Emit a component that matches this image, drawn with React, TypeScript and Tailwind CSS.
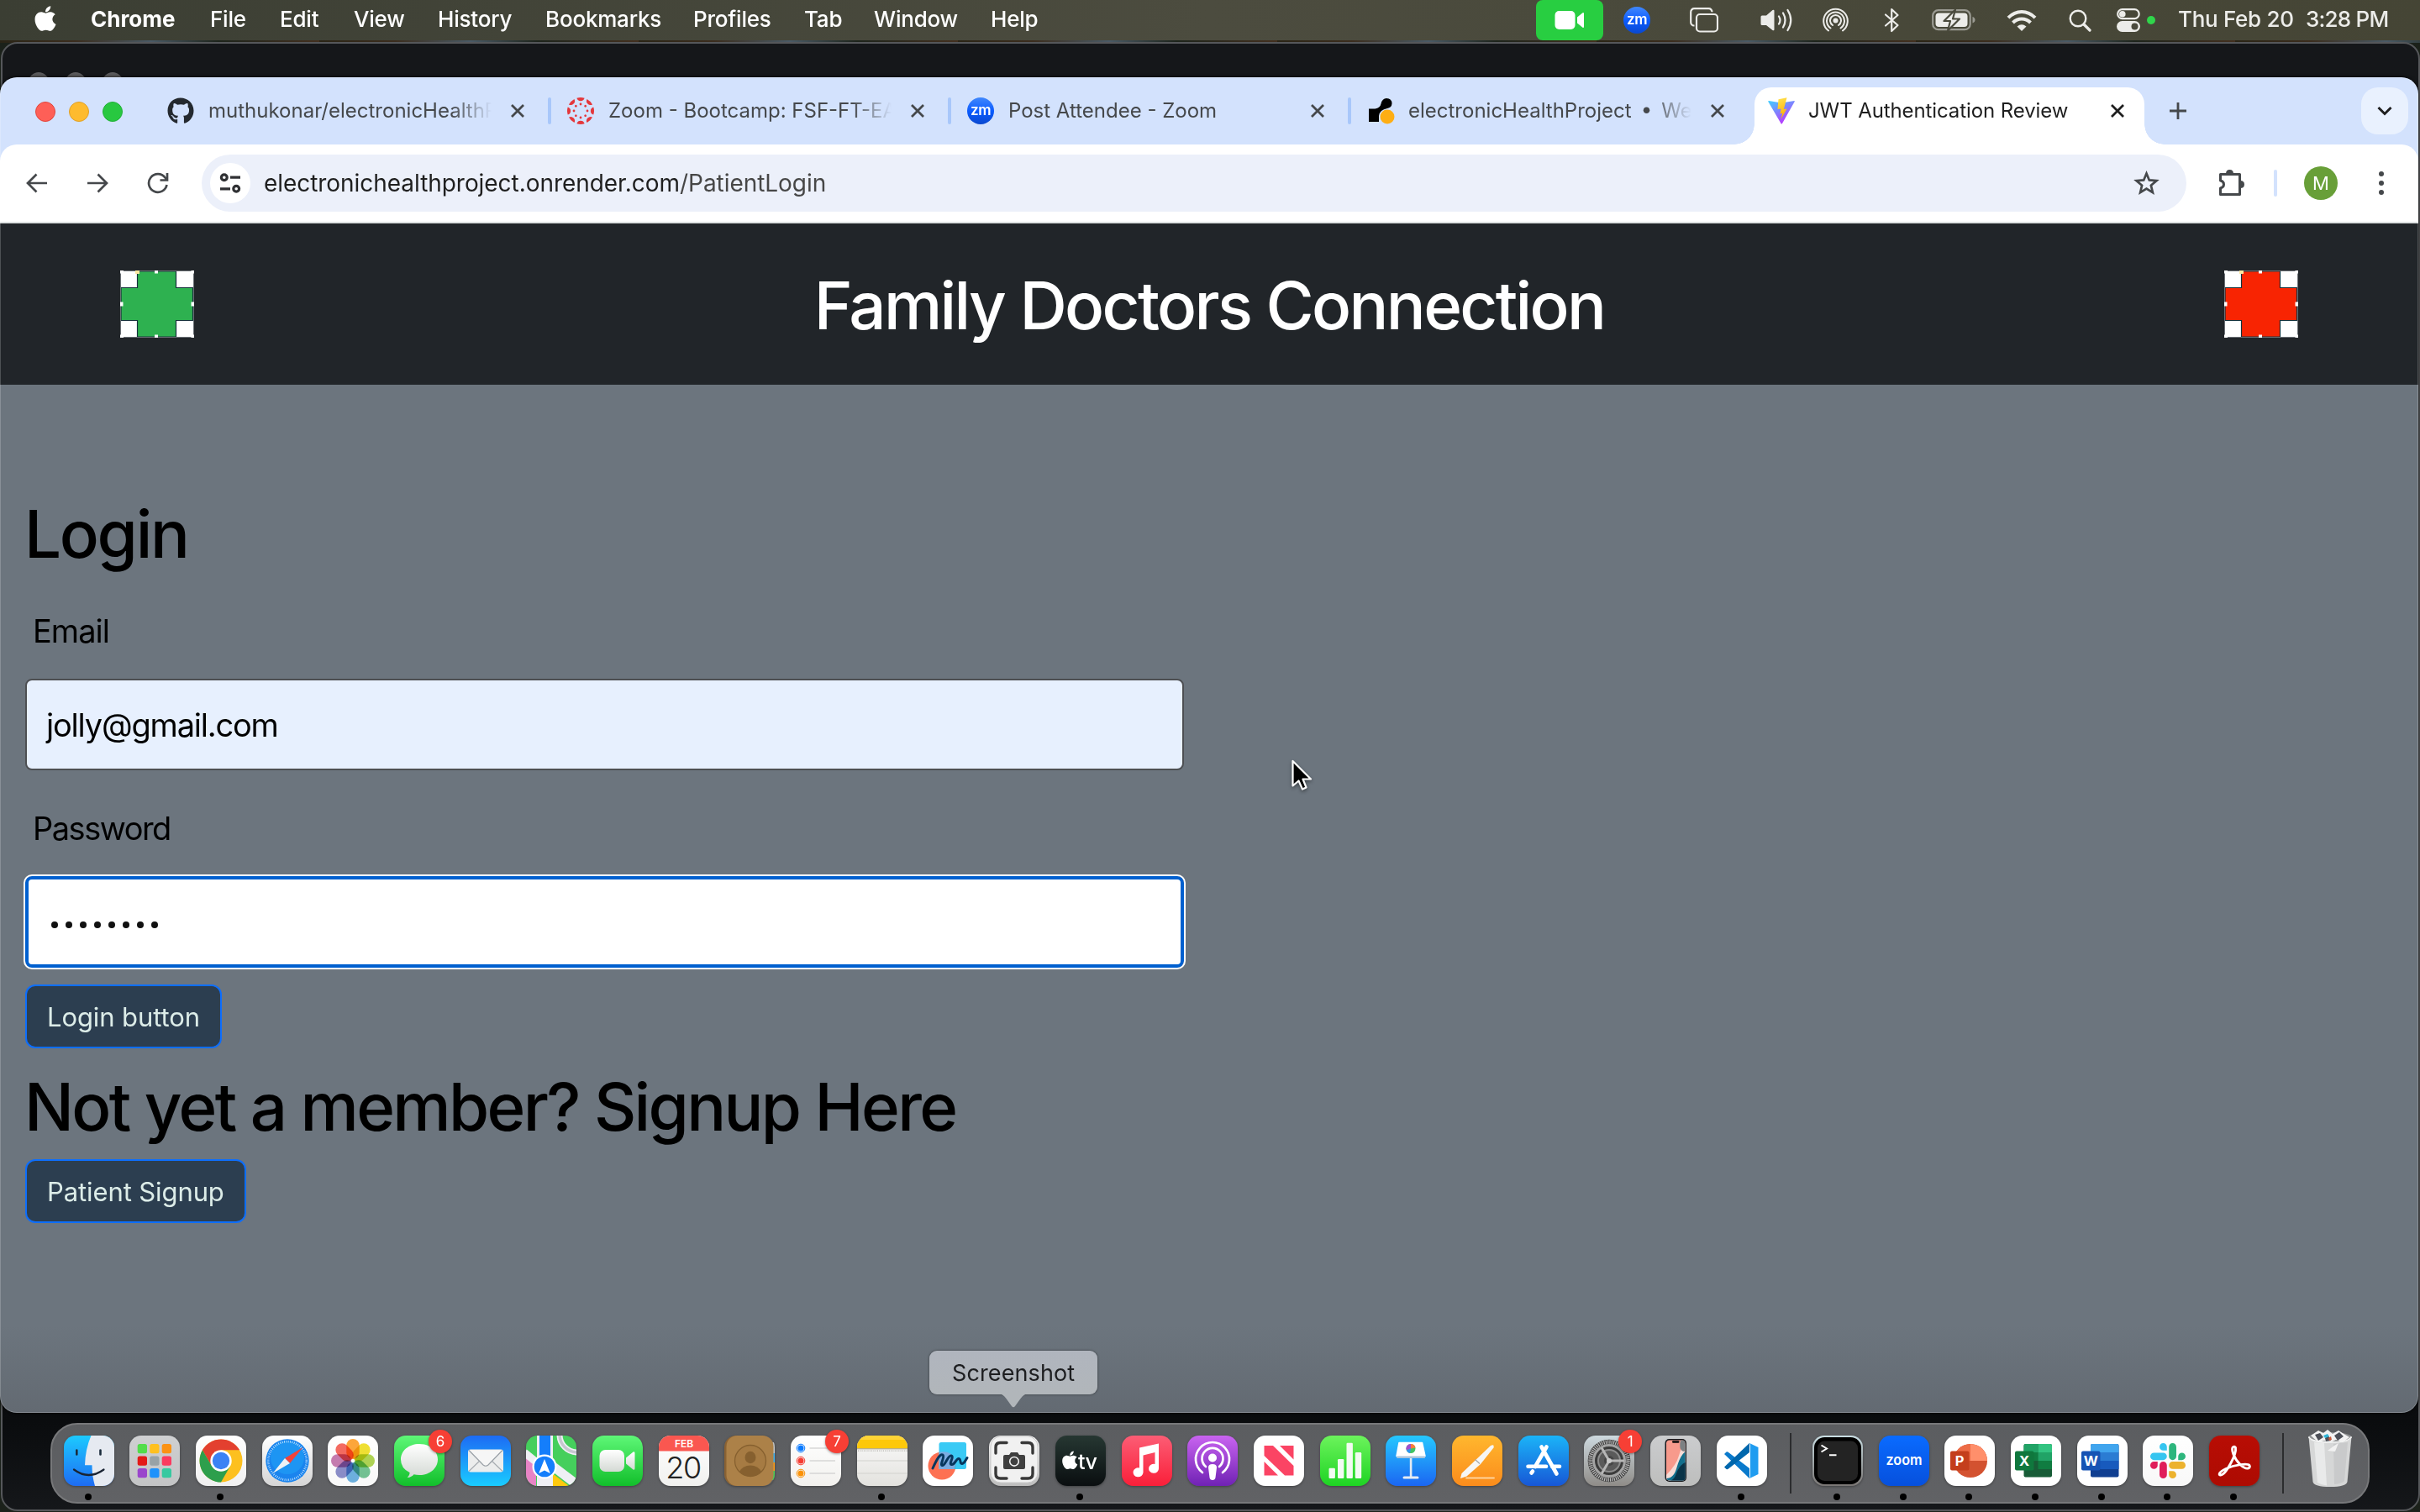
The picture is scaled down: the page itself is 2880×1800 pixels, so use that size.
import React from 'react';
import { FaApple, FaGithub } from 'react-icons/fa';

/* ---------- macOS menu bar ---------- */

const menus = [
  { label: 'File', x: 'w-[83px]' },
  { label: 'Edit', x: 'w-[88px]' },
  { label: 'View', x: 'w-[100px]' },
  { label: 'History', x: 'w-[128px]' },
  { label: 'Bookmarks', x: 'w-[176px]' },
  { label: 'Profiles', x: 'w-[132px]' },
  { label: 'Tab', x: 'w-[83px]' },
  { label: 'Window', x: 'w-[139px]' },
  { label: 'Help', x: 'w-[80px]' },
];

function ZmBadge() {
  return (
    <span className="flex h-8 w-8 shrink-0 items-center justify-center rounded-full bg-gradient-to-b from-[#4087fc] via-[#0b5cff] to-[#0a48cf] pb-[2px] text-[17px] font-semibold leading-none tracking-[-0.5px] text-white">
      zm
    </span>
  );
}

function MenuBar() {
  return (
    <header className="flex h-12 items-center bg-gradient-to-r from-[#3b3e33] via-[#4c4c3f] to-[#454535] text-[26px] font-medium leading-none text-white">
      <FaApple className="-mt-1 ml-[40px] h-[34px] w-[28px] shrink-0" />
      <span className="ml-[40px] w-[142px] pb-[3px] font-bold">Chrome</span>
      <nav className="flex pb-[3px] tracking-[-0.2px]">
        {menus.map((m) => (
          <span key={m.label} className={m.x + ' shrink-0 whitespace-nowrap'}>{m.label}</span>
        ))}
      </nav>
      <div className="ml-auto flex w-[1052px] shrink-0 items-center text-[#ecece9]">
        <span className="flex h-12 w-20 items-center justify-center rounded-lg bg-[#28ce41]">
          <svg width="36" height="24" viewBox="0 0 36 24" fill="#fff">
            <rect x="0.500" y="1" width="24" height="22" rx="5" />
            <path d="M27 8.500 33.500 3.200Q35 2.500 35 4.200V19.800Q35 21.500 33.500 20.800L27 15.500Z" />
          </svg>
        </span>
        <span className="ml-6"><ZmBadge /></span>
        <svg className="ml-[47px]" width="34" height="30" viewBox="0 0 34 30" fill="none" stroke="currentColor" strokeWidth="2.200">
          <path d="M5.500 21.500H5A4 4 0 0 1 1.200 17.500V5.200A4 4 0 0 1 5.200 1.200H22.500A4 4 0 0 1 26.500 5.200" />
          <rect x="8" y="8" width="25" height="20.500" rx="4" />
        </svg>
        <svg className="ml-[50px]" width="39" height="30" viewBox="0 0 39 30" fill="none" stroke="currentColor" strokeWidth="2.200" strokeLinecap="round">
          <path d="M2 9.500H7L14.500 3Q16.500 2 16.500 4V26Q16.500 28 14.500 27L7 21H2Q.5 21 .5 19.500V11Q.5 9.500 2 9.500Z" fill="currentColor" stroke="none" />
          <path d="M22 10.500Q25 15 22 19.500M27 6.500Q32 15 27 23.500M32.500 3Q40 15 32.500 27" />
        </svg>
        <svg className="ml-[35px]" width="31" height="30" viewBox="0 0 31 30" fill="none" stroke="currentColor" strokeWidth="2" strokeLinecap="round">
          <circle cx="15.500" cy="15.500" r="3" fill="currentColor" stroke="none" />
          <path d="M12 21A6.500 6.500 0 1 1 19 21M9.500 24.500A10.500 10.500 0 1 1 21.500 24.500M7 27.500A14.300 14.300 0 1 1 24 27.500" />
        </svg>
        <svg className="ml-[42px]" width="19" height="30" viewBox="0 0 19 30" fill="none" stroke="currentColor" strokeWidth="2.200" strokeLinejoin="round" strokeLinecap="round">
          <path d="M2 8.500 16.500 21 9.200 28V2L16.500 9 2 21.500" />
        </svg>
        <svg className="ml-[38px]" width="52" height="26" viewBox="0 0 52 26">
          <rect x="1.200" y="1.200" width="44.500" height="23" rx="6.500" fill="none" stroke="#9a9a92" strokeWidth="2.200" />
          <rect x="4.500" y="4.500" width="38" height="16.500" rx="4" fill="currentColor" />
          <path d="M48.500 9Q51.500 10 51.500 12.800 51.500 15.500 48.500 16.500Z" fill="#9a9a92" />
          <path d="M28 .5 14.500 14H22L19 25.500 33 11.500H25Z" fill="currentColor" stroke="#4a4a3d" strokeWidth="2.200" strokeLinejoin="round" />
        </svg>
        <svg className="ml-[37px]" width="36" height="27" viewBox="0 0 36 27" fill="none" stroke="currentColor" strokeWidth="4">
          <path d="M2 10.200Q9 3 18 3T34 10.200M7.500 16Q12 11.500 18 11.500T28.500 16" />
          <path d="M12.500 20.500Q18 16 23.500 20.500L18 26Z" fill="currentColor" stroke="none" />
        </svg>
        <svg className="ml-[38px]" width="27" height="27" viewBox="0 0 27 27" fill="none" stroke="currentColor" strokeWidth="2.400" strokeLinecap="round">
          <circle cx="11" cy="11" r="9.300" />
          <path d="m18 18 7 7" strokeWidth="3.200" />
        </svg>
        <svg className="ml-[30px]" width="28" height="28" viewBox="0 0 28 28">
          <rect x="1.200" y="1.200" width="25.500" height="11" rx="5.500" fill="none" stroke="currentColor" strokeWidth="2.200" />
          <circle cx="6.800" cy="6.700" r="3.800" fill="currentColor" />
          <rect x="0" y="15" width="28" height="13" rx="6.500" fill="currentColor" />
          <circle cx="21.500" cy="21.500" r="4" fill="#4a4a3d" />
        </svg>
        <span className="ml-[8px] h-[10px] w-[10px] rounded-full bg-[#30d54b]" />
        <span className="ml-[27px] w-[152px] whitespace-nowrap pb-[3px] tracking-[-0.3px]">Thu Feb 20</span>
        <span className="whitespace-nowrap pb-[3px] tracking-[-0.8px]">3:28 PM</span>
      </div>
    </header>
  );
}

/* ---------- Chrome window ---------- */

function CloseX() {
  return (
    <svg width="18" height="18" viewBox="0 0 18 18" stroke="currentColor" strokeWidth="2.800" className="shrink-0">
      <path d="m2 2 14 14M16 2 2 16" />
    </svg>
  );
}

function CanvasLogo() {
  const spokes = [0, 45, 90, 135, 180, 225, 270, 315];
  return (
    <svg width="32" height="32" viewBox="0 0 32 32" fill="#e4373c" className="shrink-0">
      {spokes.map((a) => (
        <g key={a} transform={`rotate(${a} 16 16)`}>
          <path d="M11.400 .7A16 16 0 0 1 20.600 .7A4.800 4.800 0 0 1 11.400 .7Z" />
          <circle cx="16" cy="8" r="1.400" />
        </g>
      ))}
    </svg>
  );
}

function RenderLogo() {
  return (
    <svg width="32" height="32" viewBox="0 0 32 32" className="shrink-0">
      <path d="M0 13.500H7.500Q13.500 12.500 14.500 7.500 16 1 21 1 27.500 1 27.500 7.500 27 12 22 13 13 14.500 12 22V29H0Z" fill="#000" />
      <circle cx="22" cy="23" r="8.500" fill="#feae14" />
    </svg>
  );
}

function ViteLogo() {
  return (
    <svg width="32" height="32" viewBox="0 0 32 32" className="shrink-0">
      <defs>
        <linearGradient id="vt" x1="0" y1="0" x2=".6" y2="1">
          <stop stopColor="#41d1ff" /><stop offset="1" stopColor="#bd34fe" />
        </linearGradient>
        <linearGradient id="vb" x1=".4" y1="0" x2=".6" y2="1">
          <stop stopColor="#ffe04a" /><stop offset="1" stopColor="#ffa800" />
        </linearGradient>
      </defs>
      <path d="M1 4 16 6.500 31.500 4Q32 4.300 31.700 5L17 31Q16.200 32 15.500 31L.3 5Q0 4.200 1 4Z" fill="url(#vt)" />
      <path d="M22.500 .2 12.500 2.200 11.500 14 15.500 13.400 14.500 19.500 17.200 18.800 15.500 26 22.500 13.500 18.800 14Z" fill="url(#vb)" />
    </svg>
  );
}

function Tab({ icon, title, fade, sep }: { icon: React.ReactNode; title: string; fade?: boolean; sep?: boolean }) {
  return (
    <div className="relative flex w-[476px] shrink-0 items-center pl-[22px] text-[24px] text-[#45484b]">
      {sep && <span className="absolute left-[-1px] top-1/2 h-8 w-[4px] -translate-y-1/2 rounded-full bg-[#a8c7fa]" />}
      {icon}
      <span
        className={
          'ml-[17px] w-[337px] overflow-hidden whitespace-pre leading-[32px] ' +
          (fade ? '[mask-image:linear-gradient(to_right,#000_86%,transparent_100%)]' : '')
        }
      >
        {title}
      </span>
      <span className="ml-[22px] flex"><CloseX /></span>
    </div>
  );
}

function TabStrip() {
  return (
    <div className="flex h-20 items-stretch bg-[#d3e2fd]">
      <div className="flex w-[177px] shrink-0 items-center gap-4 pl-[42px] pt-[2px]">
        <span className="h-6 w-6 rounded-full border border-[#e2453b] bg-[#fe5f57]" />
        <span className="h-6 w-6 rounded-full border border-[#e0a028] bg-[#febb2e]" />
        <span className="h-6 w-6 rounded-full border border-[#22b038] bg-[#28c840]" />
      </div>
      <Tab icon={<FaGithub className="h-8 w-8 shrink-0 text-[#24292f]" />} title="muthukonar/electronicHealthP" fade />
      <Tab icon={<CanvasLogo />} title="Zoom - Bootcamp: FSF-FT-EA" fade sep />
      <Tab icon={<ZmBadge />} title="Post Attendee - Zoom" sep />
      <Tab icon={<span className="ml-[2px] mr-[-2px]"><RenderLogo /></span>} title={'electronicHealthProject \u2009•\u2009 We'} fade sep />
      <div className="relative ml-[7px] mt-3 flex w-[464px] shrink-0 items-center rounded-t-[20px] bg-white pb-3 pl-[16px] text-[24px] text-[#1f1f1f]">
        <span className="absolute -left-6 bottom-0 h-6 w-6 bg-[radial-gradient(circle_at_0_0,transparent_23.5px,white_24px)]" />
        <span className="absolute -right-6 bottom-0 h-6 w-6 bg-[radial-gradient(circle_at_100%_0,transparent_23.5px,white_24px)]" />
        <ViteLogo />
        <span className="ml-[16px] w-[359px] whitespace-nowrap leading-[32px] tracking-[-0.100px]">JWT Authentication Review</span>
        <CloseX />
      </div>
      <div className="flex flex-1 items-center pl-[29px] text-[#45484b]">
        <svg width="22" height="22" viewBox="0 0 22 22" stroke="currentColor" strokeWidth="2.800"><path d="M11 1V21M1 11H21" /></svg>
        <span className="ml-auto mr-[12px] flex h-14 w-14 items-center justify-center rounded-[20px] bg-[#e9f1fe] text-[#1f1f1f]">
          <svg width="18" height="12" viewBox="0 0 18 12" fill="none" stroke="currentColor" strokeWidth="3"><path d="m1.500 2 7.500 7.500L16.500 2" /></svg>
        </span>
      </div>
    </div>
  );
}

function Toolbar() {
  return (
    <div className="bg-[#d3e2fd]">
      <div className="flex h-[92px] items-center rounded-t-[20px] bg-white text-[#45484b]">
        <svg className="ml-[31px]" width="26" height="24" viewBox="0 0 26 24" fill="none" stroke="currentColor" strokeWidth="2.700"><path d="M25 12H2.500M12.500 1.500 2 12l10.500 10.500" /></svg>
        <svg className="ml-[46px]" width="26" height="24" viewBox="0 0 26 24" fill="none" stroke="currentColor" strokeWidth="2.700"><path d="M1 12H23.500M13.500 1.500 24 12 13.500 22.500" /></svg>
        <svg className="ml-[46px]" width="26" height="26" viewBox="0 0 26 26" fill="none" stroke="currentColor" strokeWidth="2.700"><path d="M23.500 15A10.800 10.800 0 1 1 21.500 6.500L23.500 9M24 1V9.500H15.500" /></svg>
        <div className="ml-[39px] flex h-[68px] w-[2362px] items-center rounded-full bg-[#ecf0fa]">
          <span className="ml-[10px] flex h-12 w-12 items-center justify-center rounded-full bg-white text-[#303134]">
            <svg width="26" height="24" viewBox="0 0 26 24" fill="none" stroke="currentColor" strokeWidth="3.200">
              <circle cx="5.800" cy="5.200" r="3.400" /><path d="M13 5.200H25M1 18.800H13" /><circle cx="20.200" cy="18.800" r="3.400" />
            </svg>
          </span>
          <span className="ml-[16px] text-[28px] leading-none tracking-[-0.05px] text-[#1f1f1f]">
            electronichealthproject.onrender.com<span className="text-[#474747]">/PatientLogin</span>
          </span>
          <svg className="ml-auto mr-[32px]" width="31" height="30" viewBox="0 0 31 30" fill="none" stroke="currentColor" strokeWidth="2.700" strokeLinejoin="miter">
            <path d="m15.500 3.500 3.300 7.900 8.700.7-6.600 5.600 2 8.400-7.400-4.500-7.400 4.500 2-8.400-6.600-5.600 8.700-.7Z" />
          </svg>
        </div>
        <svg className="ml-[37px]" width="33" height="34" viewBox="0 0 33 34" fill="none" stroke="currentColor" strokeWidth="3" strokeLinejoin="round">
          <path d="M3.500 6.500H26.500V30.500H3.500V23Q7.500 22 7.500 18.500T3.500 14Z" />
          <path d="M10 6Q10 1 14.500 1T19 6ZM27 14Q32 14 32 18.500T27 23Z" fill="currentColor" stroke="none" />
        </svg>
        <span className="ml-[34px] h-8 w-[4px] rounded-full bg-[#d3e2fd]" />
        <span className="ml-[32px] flex h-10 w-10 items-center justify-center rounded-full bg-[#689f38] text-[22px] leading-none text-white">M</span>
        <span className="ml-[49px] flex flex-col gap-[5px]">
          <i className="h-[6px] w-[6px] rounded-full bg-current" />
          <i className="h-[6px] w-[6px] rounded-full bg-current" />
          <i className="h-[6px] w-[6px] rounded-full bg-current" />
        </span>
      </div>
      <div className="h-[2px] bg-[#dfe3e3]" />
    </div>
  );
}

function Cross({ color, id }: { color: string; id: string }) {
  const hx = [0, 41, 82];
  return (
    <svg width="88" height="80" viewBox="0 0 88 80" aria-label={id}>
      <rect width="88" height="80" fill="#fff" />
      <path d="M20.500 1H66.500V20.500H86.500V59.500H66.500V79H20.500V59.500H1V20.500H20.500Z" fill={color} stroke="#14303a" strokeWidth="1.200" />
      <rect x=".5" y=".5" width="87" height="79" fill="none" stroke="#6b7075" />
      {hx.map((x) => (
        <g key={x} fill="#fff">
          <rect x={x === 82 ? 84.500 : x} width="4" height="3.500" />
          {x !== 41 && <rect x={x === 82 ? 84.500 : x} y="37.500" width="3.500" height="5" />}
          <rect x={x === 82 ? 84.500 : x} y="76.500" width="4" height="3.500" />
        </g>
      ))}
      <rect x="18" y="0" width="5" height="4" fill="#fbe6a0" />
    </svg>
  );
}

function LoginPage() {
  const button =
    'flex h-[76px] w-fit items-center rounded-[12px] border-2 border-[#0d6efd] bg-[#2c3e50] px-[24px] text-[31px] leading-none tracking-[-0.100px] text-[#dcece8]';
  return (
    <div className="flex flex-1 flex-col text-black">
      <div className="flex h-[192px] items-center justify-between bg-[#212529] pl-[143px] pr-[143px]">
        <Cross color="#2eb150" id="green cross" />
        <h1 className="pt-[3px] text-[78px] font-[520] leading-none tracking-[-2.650px] text-white">Family Doctors Connection</h1>
        <Cross color="#f82402" id="red cross" />
      </div>
      <main className="flex-1 bg-[linear-gradient(to_bottom,#6c757e_0px,#6c757e_1120px,#636a72_1224px)] pl-[30px] pt-[130px]">
        <h2 className="-ml-px text-[78px] font-[520] leading-[96px] tracking-[-2.300px]">Login</h2>
        <form>
          <label className="mt-[37px] block pl-[9px] text-[38px] leading-[60px] tracking-[-1px]">Email</label>
          <div className="mt-[27px] flex h-[109px] w-[1379px] items-center rounded-[8px] border-2 border-[#4d4f52] bg-[#e7f0fe] pl-[23px] text-[38px] leading-none tracking-[-1.200px]">
            jolly@gmail.com
          </div>
          <label className="mt-[39px] block pl-[9px] text-[38px] leading-[60px] tracking-[-1.500px]">Password</label>
          <div className="mt-[27px] flex h-[109px] w-[1379px] items-center gap-[9px] rounded-[8px] border-4 border-[#0060cf] bg-white pl-[27px] pt-[7px] outline-2 outline-white">
            {Array.from({ length: 8 }, (_, i) => (
              <i key={i} className="h-[8px] w-[8px] rounded-full bg-[#111]" />
            ))}
          </div>
          <div className={'mt-[20px] ' + button}>Login button</div>
        </form>
        <h2 className="-ml-px mt-[22px] text-[78px] font-[520] leading-[96px] tracking-[-2.650px]">Not yet a member? Signup Here</h2>
        <div className={'mt-[14px] ' + button}>Patient Signup</div>
      </main>
    </div>
  );
}

/* ---------- Dock icons (60 × 60) ---------- */

function Tile({ id, from, to, children }: { id: string; from: string; to: string; children?: React.ReactNode }) {
  return (
    <svg width="60" height="60" viewBox="0 0 60 60" className="rounded-[14px] shadow-[0_1px_3px_rgba(0,0,0,0.35)]">
      <defs>
        <linearGradient id={'bg' + id} x1="0" y1="0" x2="0" y2="1">
          <stop stopColor={from} /><stop offset="1" stopColor={to} />
        </linearGradient>
        <linearGradient id={'wh' + id} x1="0" y1="0" x2="0" y2="1">
          <stop stopColor="#fff" /><stop offset="1" stopColor="#d4d9d4" />
        </linearGradient>
      </defs>
      <rect width="60" height="60" fill={`url(#bg${id})`} />
      {children}
    </svg>
  );
}

const Finder = () => (
  <Tile id="fi" from="#1ccaff" to="#1e6cf2">
    <path d="M32.500 0Q25.500 16 25 35.300H33.500Q33.500 48 37 60H60V0Z" fill="#e6eaf1" />
    <path d="M15.300 17.500V22.500M43.500 17.500V22.500" stroke="#1a2b3c" strokeWidth="2.600" strokeLinecap="round" />
    <path d="M12 40.500Q29.500 53.500 47.500 40.500" fill="none" stroke="#1a2433" strokeWidth="2.200" strokeLinecap="round" />
  </Tile>
);

const Launchpad = () => {
  const c = ['#52dd4b', '#ffc01f', '#fb9214', '#e41a17', '#98a2a6', '#fb3a5f', '#9a45cc', '#1f92fb', '#36c9a0'];
  return (
    <Tile id="lp" from="#cfd0d2" to="#c3c4c5">
      {c.map((f, i) => (
        <rect key={i} x={9.700 + (i % 3) * 14.500} y={10 + Math.floor(i / 3) * 14.500} width="11.300" height="11.300" rx="2.500" fill={f} />
      ))}
    </Tile>
  );
};

const ChromeIcon = () => (
  <Tile id="ch" from="#ffffff" to="#f0f0f0">
    <circle cx="30" cy="30" r="25.500" fill="#fdc01f" />
    <path d="M7.920 17.250A25.500 25.500 0 0 1 52.080 17.250H30L18.960 36.370Z" fill="#e3402f" />
    <path d="M7.920 17.250A25.500 25.500 0 0 0 30 55.500L41.040 36.370 30 30 18.960 36.370Z" fill="#2d9f4c" />
    <circle cx="30" cy="30" r="12.700" fill="#fff" />
    <circle cx="30" cy="30" r="10.200" fill="#3b82f4" />
  </Tile>
);

const Safari = () => (
  <Tile id="sa" from="#ffffff" to="#d5d5d5">
    <circle cx="30" cy="30" r="25.700" fill="#1a84ee" />
    <circle cx="30" cy="26" r="20" fill="#1fa0f6" opacity=".6" />
    <circle cx="30" cy="30" r="22.800" fill="none" stroke="#cfe8ff" strokeWidth="2.600" strokeDasharray=".8 1.590" />
    <path d="M48.500 14 27 27 33 33Z" fill="#f2423a" />
    <path d="M12.500 45 27 27 33 33Z" fill="#eef2f5" />
  </Tile>
);

const Photos = () => {
  const petals = ['#fd9b1e', '#efdd16', '#a5cf3c', '#62bd86', '#5ba9e0', '#7c7fc4', '#c06ba6', '#f4564b'];
  return (
    <Tile id="ph" from="#ffffff" to="#f8f8f8">
      {petals.map((f, i) => (
        <rect key={f} x="22.300" y="4" width="15.400" height="24" rx="7.700" fill={f} opacity=".88" transform={`rotate(${i * 45} 30 30)`} className="mix-blend-multiply" />
      ))}
    </Tile>
  );
};

const Messages = () => (
  <Tile id="me" from="#5ef777" to="#12bf2b">
    <path d="M30 10C42.500 10 52 18 52 28.500S42.500 47 30 47Q26.500 47 23.500 46.200 21 49.500 15.800 50 19 47 18.500 44 8 39 8 28.500C8 18 17.500 10 30 10Z" fill="url(#whme)" />
  </Tile>
);

const Mail = () => (
  <Tile id="ma" from="#1d6bf4" to="#1accff">
    <rect x="9" y="16.500" width="42" height="27" rx="3" fill="#eceded" />
    <path d="M10 42.500 24 29M50 42.500 36 29" stroke="#a8adb2" strokeWidth="1.200" />
    <path d="M10 17.500 27 35Q30 37.500 33 35L50 17.500" fill="#f6f6f6" stroke="#9aa0a6" strokeWidth="1.200" />
  </Tile>
);

const Maps = () => (
  <Tile id="mp" from="#45cf5c" to="#45cf5c">
    <path d="M0 24V60H12V34Z" fill="#e884c6" />
    <path d="M30 44 54 62H30Z" fill="#ffc90e" />
    <path d="M-2 20 14 33" stroke="#efeff4" strokeWidth="9" />
    <path d="M30 35 64 61" stroke="#efeff4" strokeWidth="11" />
    <path d="M13 0H32V60H13Z" fill="#efeff4" />
    <path d="M16 0H29V30H16Z" fill="#147efb" />
    <circle cx="61" cy="-1" r="21" fill="none" stroke="#efeff4" strokeWidth="7" />
    <circle cx="61" cy="-1" r="21" fill="none" stroke="#c6c7cf" strokeWidth="3.500" />
    <circle cx="22" cy="37" r="14.500" fill="#fff" />
    <circle cx="22" cy="37" r="12.300" fill="#147efb" />
    <path d="m22 28 6.800 17L22 41.500 15.200 45Z" fill="#fff" />
  </Tile>
);

const FaceTime = () => (
  <Tile id="ft" from="#5ef777" to="#12bf2b">
    <rect x="8.500" y="17" width="29.500" height="26" rx="7" fill="url(#whft)" />
    <path d="M40 26.500 48.500 19.500Q50.500 18.500 50.500 21V39Q50.500 41.500 48.500 40.500L40 33.500Z" fill="url(#whft)" />
  </Tile>
);

const CalendarIcon = () => (
  <Tile id="ca" from="#ffffff" to="#f1f1ef">
    <rect width="60" height="18.500" fill="#fa5750" />
    <text x="30" y="14.200" textAnchor="middle" fontSize="12" fontWeight="600" fill="#fff">FEB</text>
    <text x="29" y="51" textAnchor="middle" fontSize="36" fontWeight="300" letterSpacing="-1.500" fill="#222">20</text>
  </Tile>
);

const Contacts = () => (
  <Tile id="co" from="#5e5f62" to="#606164">
    <path d="M50 8H60V21H50Z" fill="#c3c6c8" />
    <path d="M50 21H60V32H50Z" fill="#3fb1ef" />
    <path d="M50 32H60V42H50Z" fill="#fb9a18" />
    <path d="M50 42H60V53H50Z" fill="#48cf58" />
    <rect width="57.500" height="60" rx="13" fill="#8a6233" />
    <rect x="2.500" width="56" height="60" rx="13" fill="#ac8148" />
    <circle cx="31" cy="30" r="18.500" fill="#a67b43" stroke="#86602f" strokeWidth="1.300" />
    <ellipse cx="31" cy="26" rx="6.500" ry="7.200" fill="#86602f" />
    <path d="M18 43Q22 35.500 31 35.500T44 43Q38 48.500 31 48.500T18 43Z" fill="#86602f" />
  </Tile>
);

const Reminders = () => (
  <Tile id="re" from="#ffffff" to="#f2f1ee">
    {['#0a7aff', '#f63c32', '#fb9208'].map((c, i) => (
      <g key={c}>
        <circle cx="12" cy={15 + i * 15} r="4.800" fill="none" stroke={c} strokeWidth="1" />
        <circle cx="12" cy={15 + i * 15} r="3.500" fill={c} />
        <path d={`M22.500 ${15 + i * 15}H53`} stroke="#c6c6c6" strokeWidth="1.200" />
      </g>
    ))}
  </Tile>
);

const Notes = () => (
  <Tile id="no" from="#fafafa" to="#e3e2de">
    <rect width="60" height="15.500" fill="#fdc80a" />
    <rect width="60" height="5" fill="#ffd84a" opacity=".7" />
    <path d="M0 15.800H60" stroke="#a59e86" strokeWidth="1" />
    <path d="M1 18.200H60" stroke="#b0aea8" strokeWidth="1.200" strokeDasharray="1 1.300" />
    <path d="M0 30H60M0 45H60" stroke="#d2d1cd" strokeWidth="1.200" />
  </Tile>
);

const Freeform = () => (
  <Tile id="fr" from="#ffffff" to="#ffffff">
    <circle cx="23" cy="36" r="16.500" fill="#fd7153" />
    <path d="M19.500 23Q30 17 37 27 42 38 34 40H19.500Z" fill="#fbb08a" />
    <rect x="19.500" y="8" width="32.500" height="32" rx="2.500" fill="#1fc3f4" opacity=".88" />
    <path d="M19.500 20Q33 17 37.500 27.500 40 34 37.500 40H19.500Z" fill="#7cabe0" />
    <path d="M12 39C17 28 21 21 24 23S20 35 23.500 35.500 30 23 34 24 30.500 34 34.500 34.500 40 27 43 27.500 44 34 47 33.500 51 29 53 26.500" fill="none" stroke="#07375e" strokeWidth="3" strokeLinecap="round" />
  </Tile>
);

const ScreenshotIcon = () => (
  <Tile id="ss" from="#f4f4f4" to="#bdbdbd">
    <rect x="2" y="1" width="56" height="55" rx="12" fill="#f1f1f1" stroke="#c9c9c9" />
    <path d="M8 21V14Q8 8.500 13.500 8.500H21M39 8.500H46.500Q52 8.500 52 14V21M52 38V45.500Q52 51 46.500 51H39M21 51H13.500Q8 51 8 45.500V38" fill="none" stroke="#383838" strokeWidth="3.400" strokeLinecap="round" />
    <path d="M19 23H24L26 20H34L36 23H41Q43 23 43 25V38Q43 40 41 40H19Q17 40 17 38V25Q17 23 19 23Z" fill="#3f3f3f" />
    <circle cx="30" cy="30.800" r="5.300" fill="none" stroke="#f1f1f1" strokeWidth="1.600" />
  </Tile>
);

const TvIcon = () => (
  <Tile id="tv" from="#263732" to="#0a0e10">
    <g fill="#fff" transform="translate(8 17) scale(.048)">
      <path d="M318.700 268.700c-.2-36.700 16.400-64.400 50-84.800-18.800-26.900-47.200-41.700-84.700-44.600-35.500-2.800-74.300 20.700-88.500 20.700-15 0-49.400-19.700-76.400-19.700C63.300 141.200 4 184.800 4 273.500q0 39.300 14.400 81.200c12.800 36.700 59 126.700 107.200 125.200 25.200-.6 43-17.900 75.800-17.900 31.800 0 48.300 17.900 76.400 17.900 48.600-.7 90.400-82.500 102.600-119.300-65.200-30.700-61.700-90-61.700-91.900zm-56.600-164.200c27.300-32.400 24.800-61.900 24-72.500-24.100 1.400-52 16.400-67.900 34.900-17.500 19.800-27.800 44.300-25.600 71.900 26.100 2 49.900-11.400 69.500-34.300z" />
    </g>
    <text x="27" y="39.500" fontSize="25" fontWeight="500" fill="#fff" letterSpacing="-.5">tv</text>
  </Tile>
);

const Music = () => (
  <Tile id="mu" from="#fc5d75" to="#fa1f39">
    <path d="M21 14.500 44 9.500V39A6 5.500 0 1 1 39.500 34V20L25.500 23.500V44A6 5.500 0 1 1 21 38.500Z" fill="#fff" />
  </Tile>
);

const Podcasts = () => (
  <Tile id="po" from="#c964f0" to="#7022b4">
    <path d="M18 44A20 20 0 1 1 42 44" fill="none" stroke="#fff" strokeWidth="2.700" strokeLinecap="round" />
    <path d="M22 37A12.500 12.500 0 1 1 38 37" fill="none" stroke="#fff" strokeWidth="2.700" strokeLinecap="round" />
    <circle cx="30" cy="26.500" r="5" fill="#fff" />
    <path d="M25 38Q25 34 30 34T35 38L33.500 50Q33 53 30 53T26.500 50Z" fill="#fff" />
  </Tile>
);

const News = () => (
  <Tile id="ne" from="#ffffff" to="#ffffff">
    <path d="M12.500 12H23L47.500 36V47.500H37L12.500 24Z" fill="#fb4464" />
    <path d="M31 12H47.500V28.500ZM12.500 31V47.500H29Z" fill="#fb4464" />
  </Tile>
);

const Numbers = () => (
  <Tile id="nu" from="#6cf35c" to="#1ed423">
    {[[10.500, 38.700], [21, 28], [31.500, 8.700], [41.800, 20]].map(([x, y]) => (
      <rect key={x} x={x} y={y} width="7.400" height={51 - y} rx="1.200" fill="#f3fbf2" />
    ))}
  </Tile>
);

const Keynote = () => (
  <Tile id="ke" from="#25c8ff" to="#1b66f2">
    <path d="M16 8.500H43.500L47 24.500H13Z" fill="#fff" stroke="#fff" strokeWidth="1.500" strokeLinejoin="round" />
    <path d="M14 24.500H46.500L47 27H13Z" fill="#aac4dc" />
    <circle cx="30" cy="15.500" r="5.500" fill="#41c463" />
    <path d="M30 15.500V10A5.500 5.500 0 0 0 24.800 17.500Z" fill="#a14fd0" />
    <path d="M30 15.500V10A5.500 5.500 0 0 1 35.500 14.500Z" fill="#fb7b3a" />
    <path d="M30 15.500 24.800 17.500A5.500 5.500 0 0 0 29 21Z" fill="#2f93f4" />
    <rect x="28.800" y="27" width="2.600" height="22" fill="#e4ebf2" />
    <rect x="20.500" y="48.500" width="19" height="3" rx="1.500" fill="#e7edf3" />
  </Tile>
);

const Pages = () => (
  <Tile id="pa" from="#ffb72e" to="#fb8c1c">
    <path d="M17 50.500H50" stroke="#ffd39a" strokeWidth="1.800" strokeLinecap="round" />
    <path d="M46 12Q50.500 9.500 49.500 14.500L34 34 17.500 48.500 10 51 11.500 45Z" fill="#f6f6f4" />
    <path d="m27.500 28.500 5.500 5" stroke="#a7a7a7" strokeWidth="1.300" />
  </Tile>
);

const AppStore = () => (
  <Tile id="as" from="#1bb4f8" to="#1757d6">
    <g stroke="#fff" strokeWidth="4.600" strokeLinecap="round">
      <path d="M33.500 13.500 20 37M15.500 44.500 17 42.500M27.500 13.500 45.500 45.500M11.500 36.800H33M40 36.800H49" />
    </g>
  </Tile>
);

const Settings = () => (
  <Tile id="se" from="#cdd9df" to="#8f8c88">
    <circle cx="30" cy="30" r="25.300" fill="#3b3b3b" />
    <circle cx="30" cy="30" r="22.500" fill="none" stroke="#b9b9b9" strokeWidth="4.500" strokeDasharray="1.200 1.150" />
    <circle cx="30" cy="30" r="18.500" fill="none" stroke="#a4a4a4" strokeWidth="3" />
    <circle cx="30" cy="30" r="13" fill="#5a5a5a" stroke="#8d8d8d" strokeWidth="2" />
    <circle cx="30" cy="30" r="6" fill="#454545" />
    <path d="M30 30H48M30 30 21 14.500M30 30 21 45.500" stroke="#b6b6b6" strokeWidth="3" />
    <circle cx="30" cy="30" r="3" fill="#c9c9c9" />
  </Tile>
);

const Mirroring = () => (
  <Tile id="ip" from="#cbccce" to="#bdbebd">
    <rect x="17.500" y="4" width="25.500" height="51" rx="5" fill="#16181c" />
    <rect x="19" y="5.500" width="22.500" height="48" rx="3.800" fill="#f79a8c" />
    <path d="M41.500 9Q37 13 34 24T19 47V50Q19 53.500 23 53.500H38Q41.500 53.500 41.500 50Z" fill="#f6dcd6" />
    <path d="M41.500 19Q35 25 31.500 38T19 51Q20 53.500 23 53.500H38Q41.500 53.500 41.500 50Z" fill="#136f8c" />
    <path d="M41.500 32Q34 36 31 45T23 53.500H38Q41.500 53.500 41.500 50Z" fill="#0a3448" />
    <path d="M36 5.500H38Q41.500 5.500 41.500 9V19Q33 19 36 5.500Z" fill="#7c8083" />
    <rect x="26" y="6.200" width="8.500" height="2.600" rx="1.300" fill="#0a0a0a" />
  </Tile>
);

const VsCode = () => (
  <Tile id="vs" from="#ffffff" to="#ffffff">
    <path d="M9 22 11.500 19.500Q13 19 14 20L39 39V51Z" fill="#0a7acc" />
    <path d="M9 37.500 11.500 40Q13 40.500 14 39.500L39 20V9Z" fill="#0067ad" />
    <path d="M39 9 49.500 14V46L39 51Q40 50 40 48V12Q40 10 39 9Z" fill="#1f9cf0" />
  </Tile>
);

const Terminal = () => (
  <Tile id="te" from="#c8dde2" to="#7a7674">
    <rect x="2" y="2" width="56" height="56" rx="12.500" fill="#000" />
    <rect x="6" y="6.500" width="48" height="47.500" rx="8.500" fill="#232323" />
    <path d="m10.500 11.500 6.500 4-6.500 4" fill="none" stroke="#fff" strokeWidth="2" />
    <path d="M20 23.200H28.500" stroke="#fff" strokeWidth="2" />
  </Tile>
);

const ZoomIcon = () => (
  <Tile id="zo" from="#0a6bff" to="#0650dd">
    <text x="30" y="34.500" textAnchor="middle" fontSize="17.500" fontWeight="600" fill="#fff" textLength="43" lengthAdjust="spacingAndGlyphs">zoom</text>
  </Tile>
);

function OfficeLetter({ x, color, l }: { x: number; color: string; l: string }) {
  return (
    <>
      <rect x={x} y="18.500" width="22.500" height="23" rx="2" fill={color} />
      <text x={x + 11.200} y="35.800" textAnchor="middle" fontSize="16.500" fontWeight="700" fill="#fff">{l}</text>
    </>
  );
}

const PowerPoint = () => (
  <Tile id="pp" from="#ffffff" to="#ffffff">
    <circle cx="31" cy="30" r="20" fill="#d35230" />
    <path d="M31 10V30H11A20 20 0 0 1 31 10Z" fill="#ed6c47" />
    <path d="M31 10A20 20 0 0 1 51 30H31Z" fill="#ff8f6b" />
    <OfficeLetter x={7} color="#c43e1c" l="P" />
  </Tile>
);

const Excel = () => (
  <Tile id="ex" from="#ffffff" to="#ffffff">
    <rect x="15.500" y="10" width="33.500" height="39.500" rx="2" fill="#185c37" />
    <path d="M15.500 12Q15.500 10 17.500 10H32.500V20H15.500Z" fill="#21a366" />
    <path d="M32.500 10H47Q49 10 49 12V20H32.500Z" fill="#33c481" />
    <path d="M15.500 20H32.500V30H15.500ZM32.500 30H49V40H32.500Z" fill="#107c41" />
    <path d="M32.500 20H49V30H32.500Z" fill="#21a366" />
    <OfficeLetter x={5} color="#0f773d" l="X" />
  </Tile>
);

const Word = () => (
  <Tile id="wo" from="#ffffff" to="#ffffff">
    <rect x="16" y="10" width="33.500" height="39.500" rx="2" fill="#103f91" />
    <path d="M16 20V12Q16 10 18 10H47.500Q49.500 10 49.500 12V20Z" fill="#41a5ee" />
    <path d="M16 20H49.500V30H16Z" fill="#2b7cd3" />
    <path d="M16 30H49.500V40H16Z" fill="#185abd" />
    <OfficeLetter x={5} color="#1653b4" l="W" />
  </Tile>
);

const Slack = () => (
  <Tile id="sl" from="#ffffff" to="#f8f8f8">
    <g transform="translate(9 9) scale(1.750)">
      <path d="M8.800 0a2.500 2.500 0 1 0 0 5h2.500V2.500A2.500 2.500 0 0 0 8.800 0ZM8.800 6.500H2.500a2.500 2.500 0 0 0 0 5h6.300a2.500 2.500 0 0 0 0-5Z" fill="#36c5f0" />
      <path d="M24 9a2.500 2.500 0 0 0-5 0v2.500h2.500A2.500 2.500 0 0 0 24 9ZM17.700 9V2.500a2.500 2.500 0 0 0-5 0V9a2.500 2.500 0 0 0 5 0Z" fill="#2eb67d" />
      <path d="M15.200 24a2.500 2.500 0 0 0 0-5h-2.500v2.500a2.500 2.500 0 0 0 2.500 2.500ZM15.200 17.600h6.300a2.500 2.500 0 0 0 0-5h-6.300a2.500 2.500 0 0 0 0 5Z" fill="#ecb22e" />
      <path d="M0 15.100a2.500 2.500 0 0 0 5 0v-2.500H2.500A2.500 2.500 0 0 0 0 15.100ZM6.300 15.100v6.400a2.500 2.500 0 0 0 5 0v-6.400a2.500 2.500 0 0 0-5 0Z" fill="#e01e5a" />
    </g>
  </Tile>
);

const Acrobat = () => (
  <Tile id="ac" from="#b80d04" to="#ad0b02">
    <path d="M29 13.500C25 15 30 28 37.500 35S50 38.500 48 35.500 30 35 20 39.500 11 48.500 15.500 46.500 33 23 31.500 14.500Q30.500 12.500 29 13.500Z" fill="none" stroke="#fff" strokeWidth="2.900" />
  </Tile>
);

const Trash = () => (
  <svg width="56" height="70" viewBox="0 0 56 70" className="-mt-2">
    <path d="M2.500 9 7.500 63Q9 69 28 69T48.500 63L53.500 9Z" fill="#d6d7d7" />
    <path d="M9 16 13 64Q18 67 24 67.500L21 17Z" fill="#e9eaea" />
    <path d="m32 18 1 48Q42 65 45 62L49 16Z" fill="#c9cacb" />
    <ellipse cx="28" cy="10" rx="25.800" ry="6" fill="#8e9091" />
    <path d="m5 8 9-6 6 3 5-4 6 5 7-4 8 5 5 3-8 6-8-3-6 3-8-2-7 2Z" fill="#f2f2f2" />
    <path d="m10 7 6-2 4 5-6 4ZM33 8l6-4 5 5-7 5ZM22 11l4-3 3 6-6 1Z" fill="#4c4f57" />
    <path d="m20 8 5-2 2 3-5 2Z" fill="#2fb5d8" />
    <path d="m26 11 3-2 1 4-3 1Z" fill="#c85a3a" />
    <path d="M2.500 9.500Q6 16 28 16T53.500 9.500" fill="none" stroke="#f3f4f4" strokeWidth="1.600" />
    <path d="M25 26 33 20 38 17 34 27Z" fill="#f2f2f2" />
  </svg>
);

type Item = { key: string; icon: React.ReactNode; running?: boolean; badge?: string; tip?: string };

const apps: Item[] = [
  { key: 'finder', icon: <Finder />, running: true },
  { key: 'launchpad', icon: <Launchpad /> },
  { key: 'chrome', icon: <ChromeIcon />, running: true },
  { key: 'safari', icon: <Safari /> },
  { key: 'photos', icon: <Photos /> },
  { key: 'messages', icon: <Messages />, badge: '6' },
  { key: 'mail', icon: <Mail /> },
  { key: 'maps', icon: <Maps /> },
  { key: 'facetime', icon: <FaceTime /> },
  { key: 'calendar', icon: <CalendarIcon /> },
  { key: 'contacts', icon: <Contacts /> },
  { key: 'reminders', icon: <Reminders />, badge: '7' },
  { key: 'notes', icon: <Notes />, running: true },
  { key: 'freeform', icon: <Freeform /> },
  { key: 'screenshot', icon: <ScreenshotIcon />, tip: 'Screenshot' },
  { key: 'tv', icon: <TvIcon />, running: true },
  { key: 'music', icon: <Music /> },
  { key: 'podcasts', icon: <Podcasts /> },
  { key: 'news', icon: <News /> },
  { key: 'numbers', icon: <Numbers /> },
  { key: 'keynote', icon: <Keynote /> },
  { key: 'pages', icon: <Pages /> },
  { key: 'appstore', icon: <AppStore /> },
  { key: 'settings', icon: <Settings />, badge: '1' },
  { key: 'mirroring', icon: <Mirroring /> },
  { key: 'vscode', icon: <VsCode />, running: true },
];

const recents: Item[] = [
  { key: 'terminal', icon: <Terminal />, running: true },
  { key: 'zoom', icon: <ZoomIcon />, running: true },
  { key: 'powerpoint', icon: <PowerPoint />, running: true },
  { key: 'excel', icon: <Excel />, running: true },
  { key: 'word', icon: <Word />, running: true },
  { key: 'slack', icon: <Slack />, running: true },
  { key: 'acrobat', icon: <Acrobat />, running: true },
];

function DockItem({ item }: { item: Item }) {
  return (
    <div className="relative flex w-[78.700px] shrink-0 flex-col items-start">
      {item.icon}
      {item.running && <span className="ml-[25px] mt-[9px] h-2 w-2 rounded-full bg-black" />}
      {item.badge && (
        <span className="absolute -top-[7px] left-[41px] flex h-7 w-7 items-center justify-center rounded-full bg-[#f73f35] text-[17px] leading-none text-white shadow-[0_1px_3px_rgba(0,0,0,0.4)]">
          {item.badge}
        </span>
      )}
      {item.tip && (
        <span className="absolute -top-[101px] left-[29px] flex h-[52px] w-[200px] -translate-x-1/2 items-center justify-center rounded-[9px] bg-gradient-to-b from-[#b0b5be] to-[#b1b6ba] text-[27px] leading-none tracking-[0.100px] text-[#1d1e20] shadow-[0_0_3px_rgba(0,0,0,0.5)]">
          {item.tip}
          <svg className="absolute -bottom-[16px] left-[83px]" width="34" height="17" viewBox="0 0 34 17">
            <path d="M0 0H34Q29 1 25.500 6L19 15Q17 17.500 15 15L8.500 6Q5 1 0 0Z" fill="#b1b6ba" />
          </svg>
        </span>
      )}
    </div>
  );
}

function Dock() {
  return (
    <div className="absolute left-[60px] top-[1694px] flex h-24 w-[2760px] items-start rounded-[32px] border-2 border-[#77787a] bg-gradient-to-b from-[#5b5d60] to-[#616265] pl-[13.500px] pt-[13px]">
      {apps.map((a) => <DockItem key={a.key} item={a} />)}
      <span className="-mt-[3px] ml-[9px] mr-[24.500px] h-[72px] w-[2px] shrink-0 bg-[#2b2c2e]" />
      {recents.map((a) => <DockItem key={a.key} item={a} />)}
      <span className="-mt-[3px] ml-[8px] mr-[27px] h-[72px] w-[2px] shrink-0 bg-[#2b2c2e]" />
      <div className="shrink-0"><Trash /></div>
    </div>
  );
}

export default function App() {
  return (
    <div className="relative h-[1800px] w-[2880px] overflow-hidden bg-[#1b211a] font-['Inter',sans-serif]">
      <MenuBar />
      <div className="h-[3px] bg-[repeating-linear-gradient(90deg,#2a2416_0px,#3b2d1e_90px,#4a5a66_180px,#1d241c_260px,#43301f_380px)]" />

      {/* Window behind the browser */}
      <div className="absolute left-px top-[50px] h-[1749px] w-[2879px] overflow-hidden rounded-[20px] border-2 border-[#55575a] bg-[linear-gradient(to_bottom,#15171a_0%,#15171a_80%,#0a0c0e_94%,#15171a_100%)]">
        <div className="flex gap-[20px] pl-[31px] pt-[34px]">
          <span className="h-6 w-6 rounded-full bg-[#5c5c5e]" />
          <span className="h-6 w-6 rounded-full bg-[#5c5c5e]" />
          <span className="h-6 w-6 rounded-full bg-[#5c5c5e]" />
        </div>
      </div>

      {/* Browser window */}
      <div className="absolute left-0 top-[92px] flex h-[1590px] w-[2878px] flex-col overflow-hidden rounded-[20px] shadow-[0_0_4px_rgba(0,0,0,0.9)]">
        <TabStrip />
        <Toolbar />
        <LoginPage />
        <div className="pointer-events-none absolute inset-0 rounded-[20px] border border-white/20" />
      </div>

      <Dock />

      {/* Mouse pointer */}
      <svg className="absolute left-[1536px] top-[903px] drop-shadow-[0_2px_2px_rgba(0,0,0,0.4)]" width="28" height="40" viewBox="0 0 28 40">
        <path d="M2.500 3V32.500L9.500 26.500 14 36.500 18.500 34.500 14.500 24.500H24Z" fill="#000" stroke="#fff" strokeWidth="2.200" strokeLinejoin="round" />
      </svg>
    </div>
  );
}
